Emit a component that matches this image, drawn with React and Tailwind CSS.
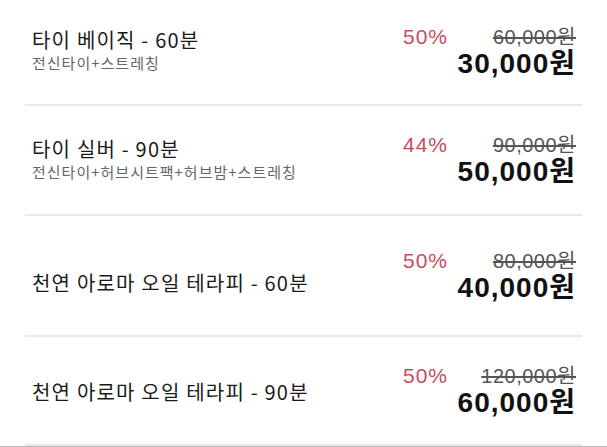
const FONT = { fontFamily: '"Noto Sans CJK KR", "Noto Sans", sans-serif' };
const NUM = { fontFamily: '"Liberation Sans", "Noto Sans CJK KR", sans-serif' };

const items = [
  { title: '타이 베이직 - 60분', desc: '전신타이+스트레칭', rate: '50%', price: '60,000원', sale: '30,000원', h: 'h-[104px]', left: 'mb-[5px]' },
  { title: '타이 실버 - 90분', desc: '전신타이+허브시트팩+허브밤+스트레칭', rate: '44%', price: '90,000원', sale: '50,000원', h: 'h-[108px]', left: 'mb-[3px]' },
  { title: '천연 아로마 오일 테라피 - 60분', rate: '50%', price: '80,000원', sale: '40,000원', h: 'h-[119px]', left: 'mt-[14px]' },
  { title: '천연 아로마 오일 테라피 - 90분', rate: '50%', price: '120,000원', sale: '60,000원', h: 'h-[107px]', left: 'mt-[2px]' },
];

function Row({ item }) {
  return (
    <div className={`flex items-center justify-between pl-[7px] pr-[6px] ${item.h}`}>
      <div className={`flex flex-col ${item.left}`}>
        <span className="text-[20px] leading-[26px] text-[#1a1a1a] tracking-[1.2px]">{item.title}</span>
        {item.desc && (
          <span className="text-[15px] leading-[20px] text-[#666] tracking-[1px]">{item.desc}</span>
        )}
      </div>
      <div className="flex flex-col items-end" style={NUM}>
        <div className="flex w-[173px] items-center justify-between leading-[24px]">
          <span className="text-[21px] text-[#c64d5c] tracking-[1px]">{item.rate}</span>
          <span className="text-[20px] text-[#555] line-through tracking-[0.5px]">{item.price}</span>
        </div>
        <span className="text-[28px] leading-[30px] font-bold text-[#111] tracking-[1px]">{item.sale}</span>
      </div>
    </div>
  );
}

export default function App() {
  return (
    <div className="w-[607px] h-[447px] bg-white overflow-hidden" style={FONT}>
      <div className="mx-[25px]">
        {items.map((item, i) => (
          <div key={i}>
            <Row item={item} />
            <div className="h-[2px] bg-[#e9e9e9]" />
          </div>
        ))}
      </div>
      <div className="h-px bg-[#b9b9b9]" />
    </div>
  );
}
